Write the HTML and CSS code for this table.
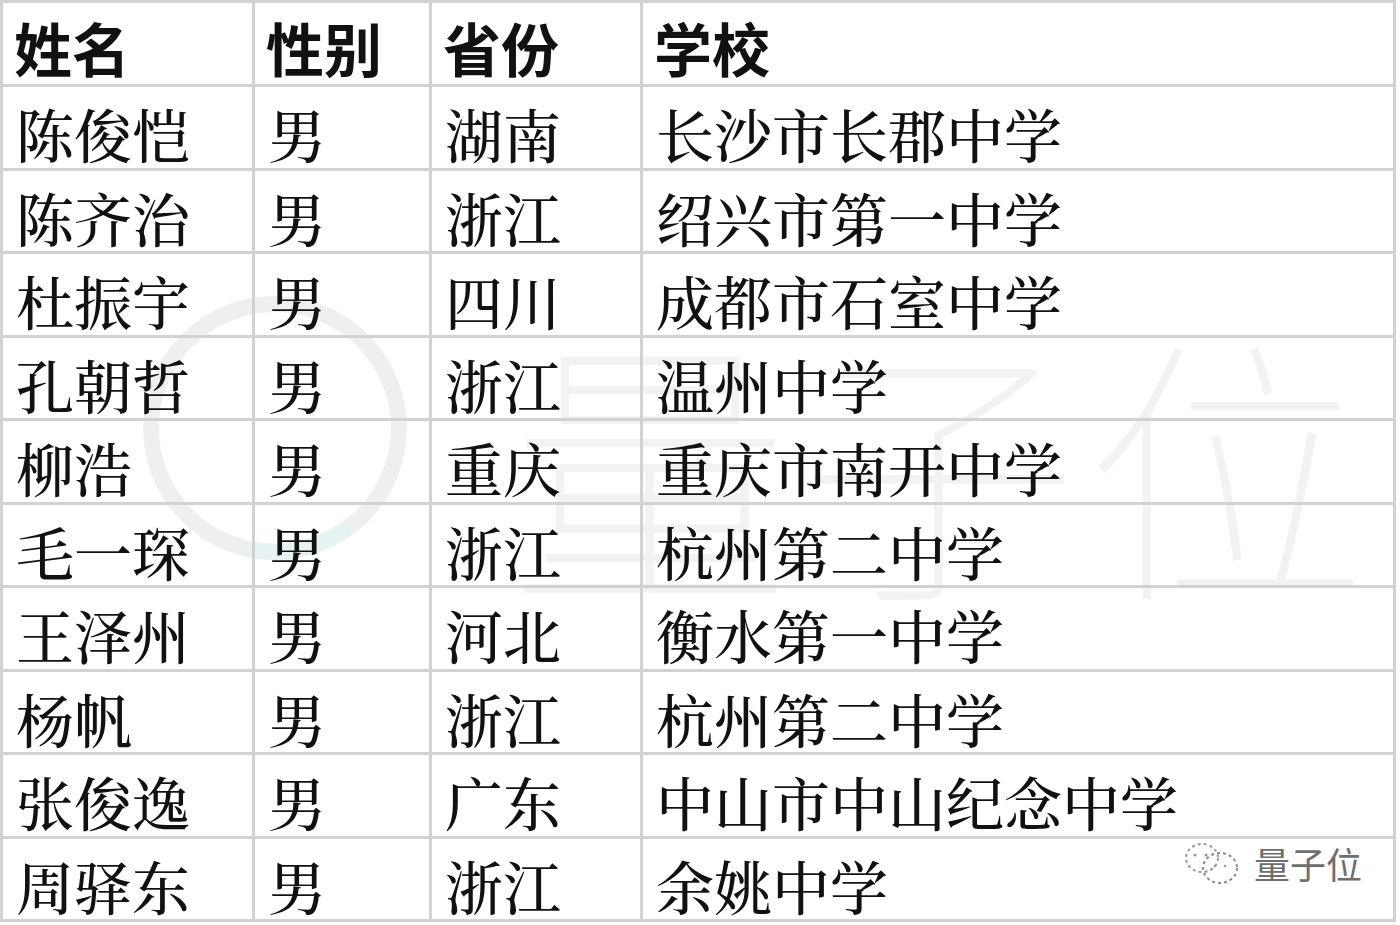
FILE: index.html
```html
<!DOCTYPE html>
<html lang="zh-CN">
<head>
<meta charset="utf-8">
<link rel="stylesheet" href="styles.css">
</head>
<body>
<div class="page">
  <table class="roster">
    <colgroup>
      <col class="c-name"><col class="c-sex"><col class="c-prov"><col class="c-school">
    </colgroup>
    <thead>
      <tr><th>姓名</th><th>性别</th><th>省份</th><th>学校</th></tr>
    </thead>
    <tbody>
      <tr><td>陈俊恺</td><td>男</td><td>湖南</td><td>长沙市长郡中学</td></tr>
      <tr><td>陈齐治</td><td>男</td><td>浙江</td><td>绍兴市第一中学</td></tr>
      <tr><td>杜振宇</td><td>男</td><td>四川</td><td>成都市石室中学</td></tr>
      <tr><td>孔朝哲</td><td>男</td><td>浙江</td><td>温州中学</td></tr>
      <tr><td>柳浩</td><td>男</td><td>重庆</td><td>重庆市南开中学</td></tr>
      <tr><td>毛一琛</td><td>男</td><td>浙江</td><td>杭州第二中学</td></tr>
      <tr><td>王泽州</td><td>男</td><td>河北</td><td>衡水第一中学</td></tr>
      <tr><td>杨帆</td><td>男</td><td>浙江</td><td>杭州第二中学</td></tr>
      <tr><td>张俊逸</td><td>男</td><td>广东</td><td>中山市中山纪念中学</td></tr>
      <tr><td>周驿东</td><td>男</td><td>浙江</td><td>余姚中学</td></tr>
    </tbody>
  </table>

  <div class="watermark" aria-hidden="true">
    <svg class="wm-ring" width="280" height="280" viewBox="0 0 280 280">
      <circle cx="140" cy="140" r="124" fill="none" stroke="#efefef" stroke-width="16"/>
      <path d="M215 238 A124 124 0 0 1 110 260" fill="none" stroke="#e6f3f2" stroke-width="16"/>
    </svg>
    <span class="wm-text">量子位</span>
  </div>

  <div class="badge">
    <svg class="badge-icon" width="60" height="50" viewBox="0 0 60 50">
      <ellipse cx="20" cy="20" rx="16" ry="14" fill="none" stroke="#9a9a9a" stroke-width="2" stroke-dasharray="3 3"/>
      <ellipse cx="38" cy="30" rx="17" ry="15" fill="none" stroke="#8a8a8a" stroke-width="2" stroke-dasharray="3 3"/>
      <circle cx="13" cy="17" r="1.5" fill="#999"/>
      <circle cx="24" cy="17" r="1.5" fill="#999"/>
      <circle cx="33" cy="28" r="1.3" fill="#999"/>
      <circle cx="43" cy="28" r="1.3" fill="#999"/>
    </svg>
    <span class="badge-text">量子位</span>
  </div>
</div>
</body>
</html>
```

FILE: styles.css
```css
html, body {
  margin: 0;
  padding: 0;
  background: #ffffff;
}

.page {
  position: relative;
  width: 1400px;
}

.roster {
  border-collapse: separate;
  border-spacing: 0;
  table-layout: fixed;
  width: 1396px;
  border-left: 3px solid #d2d2d2;
  border-top: 3px solid #d2d2d2;
  position: relative;
  z-index: 1;
}

.c-name { width: 252px; }
.c-sex { width: 177px; }
.c-prov { width: 211px; }
.c-school { width: 753px; }

.roster th,
.roster td {
  box-sizing: border-box;
  border-right: 3px solid #d2d2d2;
  border-bottom: 3px solid #d2d2d2;
  padding: 0 0 0 13px;
  text-align: left;
  white-space: nowrap;
  color: #111;
  font-size: 58px;
  line-height: 1;
  vertical-align: middle;
}

.roster th {
  height: 84px;
  font-family: "Noto Sans CJK SC", sans-serif;
  font-weight: 700;
  padding-left: 11px;
  padding-top: 6px;
}

.roster td {
  height: 83.5px;
  font-family: "Noto Serif CJK SC", "Noto Sans CJK SC", serif;
  font-weight: 500;
  padding-top: 12px;
}

.watermark {
  position: absolute;
  left: 135px;
  top: 288px;
  display: flex;
  align-items: flex-start;
  gap: 95px;
  z-index: 0;
  white-space: nowrap;
}

.wm-text {
  font-family: "Noto Sans CJK SC", sans-serif;
  font-weight: 100;
  font-size: 280px;
  letter-spacing: 8px;
  color: #f2f2f2;
  line-height: 1;
  margin-top: 30px;
}

.badge {
  position: absolute;
  left: 1182px;
  top: 838px;
  display: flex;
  align-items: center;
  gap: 12px;
  z-index: 2;
}

.badge-text {
  font-family: "Noto Sans CJK SC", sans-serif;
  font-size: 36px;
  color: #6e6e6e;
  line-height: 1;
}
```
